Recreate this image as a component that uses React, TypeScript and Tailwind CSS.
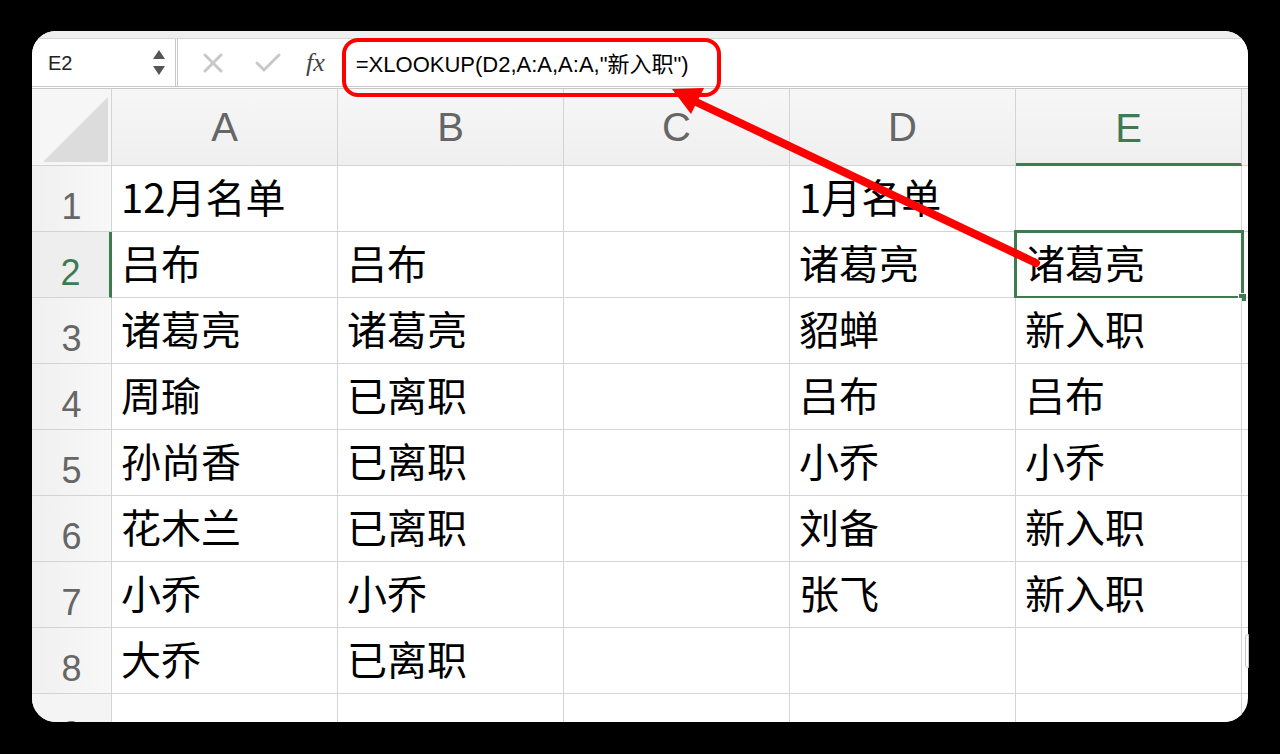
import React from "react";

const cols = ["A", "B", "C", "D", "E"];

const data = [
  ["12月名单", "", "", "1月名单", ""],
  ["吕布", "吕布", "", "诸葛亮", "诸葛亮"],
  ["诸葛亮", "诸葛亮", "", "貂蝉", "新入职"],
  ["周瑜", "已离职", "", "吕布", "吕布"],
  ["孙尚香", "已离职", "", "小乔", "小乔"],
  ["花木兰", "已离职", "", "刘备", "新入职"],
  ["小乔", "小乔", "", "张飞", "新入职"],
  ["大乔", "已离职", "", "", ""],
];

const cjk = { fontFamily: '"Noto Sans CJK SC", "Noto Sans", sans-serif' };
const latin = { fontFamily: '"Liberation Sans", Arial, sans-serif' };

function FormulaBar() {
  return (
    <div className="flex flex-col">
      <div className="h-[8px] bg-[#efefef] border-b border-[#d6d6d6]" />
      <div className="flex h-[50px] items-center bg-white border-b-[3px] border-double border-[#c8c8c8]">
        <div className="flex h-full w-[146px] items-center justify-between border-r-[3px] border-double border-[#c8c8c8] pl-[16px] pr-[10px]">
          <span className="text-[20px] text-[#222]" style={latin}>
            E2
          </span>
          <div className="flex flex-col gap-[7px]">
            <svg width="12" height="9" viewBox="0 0 12 9">
              <path d="M6 0 L12 9 L0 9 Z" fill="#555" />
            </svg>
            <svg width="12" height="9" viewBox="0 0 12 9">
              <path d="M0 0 L12 0 L6 9 Z" fill="#555" />
            </svg>
          </div>
        </div>
        <div className="flex items-center pl-[24px]">
          <svg width="22" height="22" viewBox="0 0 22 22">
            <path d="M3 3 L19 19 M19 3 L3 19" stroke="#c8c8c8" strokeWidth="3" strokeLinecap="round" />
          </svg>
          <svg className="ml-[30px]" width="28" height="22" viewBox="0 0 28 22">
            <path d="M3 11 L10 18 L25 3" stroke="#c8c8c8" strokeWidth="3" fill="none" strokeLinecap="round" />
          </svg>
          <span
            className="ml-[24px] text-[26px] italic text-[#444]"
            style={{ fontFamily: '"Liberation Serif", "Times New Roman", serif' }}
          >
            fx
          </span>
          <span
            className="ml-[31px] pt-[3px] text-[22px] text-black"
            style={{ fontFamily: '"Liberation Sans", "Noto Sans CJK SC", sans-serif' }}
          >
            =XLOOKUP(D2,A:A,A:A,"新入职")
          </span>
        </div>
      </div>
    </div>
  );
}

function HeaderRow() {
  return (
    <div className="flex h-[77px]">
      <div className="relative w-[80px] shrink-0 border-r border-b border-[#d4d4d4] bg-[#f6f6f6]">
        <svg className="absolute left-[11px] top-[8px]" width="66" height="65" viewBox="0 0 66 65">
          <path d="M0 65 L65 65 L65 0 Z" fill="#dcdcdc" />
        </svg>
      </div>
      {cols.map((c) => (
        <div
          key={c}
          className={`flex w-[226px] shrink-0 items-center justify-center border-r border-[#d4d4d4] bg-gradient-to-b from-[#f7f7f7] to-[#efefef] text-[40px] ${
            c === "E" ? "border-b-[3px] border-b-[#3e7b50] text-[#3e7b50] pt-[3px]" : "border-b border-b-[#d4d4d4] text-[#666]"
          }`}
          style={latin}
        >
          {c}
        </div>
      ))}
      <div className="flex-1 border-b border-[#d4d4d4] bg-[#f2f2f2]" />
    </div>
  );
}

function Row({ n, cells }: { n: number; cells: string[] }) {
  const active = n === 2;
  return (
    <div className="flex h-[66px]">
      <div
        className={`flex w-[80px] shrink-0 items-center justify-center border-b border-[#d4d4d4] pt-[16px] text-[36px] ${
          active
            ? "border-r-[3px] border-r-[#3e7b50] bg-[#eeeeee] text-[#3e7b50]"
            : "border-r border-r-[#d4d4d4] bg-gradient-to-r from-[#f0f0f0] to-[#f8f8f8] text-[#666]"
        }`}
        style={latin}
      >
        {n}
      </div>
      {cells.map((v, i) => (
        <div
          key={i}
          className="relative flex w-[226px] shrink-0 items-center border-r border-b border-[#d4d4d4] bg-white pb-[6px] pl-[9px] text-[40px] text-black"
          style={cjk}
        >
          {v}
          {active && i === 4 && (
            <div className="absolute -left-[2px] -top-[2px] h-[69px] w-[230px] border-[3px] border-[#3e7b50]">
              <div className="absolute -bottom-[6px] -right-[6px] h-[9px] w-[9px] border border-white bg-[#3e7b50]" />
            </div>
          )}
        </div>
      ))}
      <div className="flex-1 border-b border-[#d4d4d4] bg-white" />
    </div>
  );
}

export default function App() {
  return (
    <div className="relative h-[754px] w-[1280px] overflow-hidden bg-black pl-[32px] pt-[31px]">
      <div className="h-[691px] w-[1216px] overflow-hidden rounded-[24px] bg-white">
        <FormulaBar />
        <HeaderRow />
        {data.map((cells, i) => (
          <Row key={i} n={i + 1} cells={cells} />
        ))}
        <div className="flex h-[66px]">
          <div
            className="flex w-[80px] shrink-0 items-center justify-center border-r border-[#d4d4d4] bg-[#f4f4f4] pt-[16px] text-[36px] text-[#666]"
            style={latin}
          >
            9
          </div>
          {cols.map((c) => (
            <div key={c} className="w-[226px] shrink-0 border-r border-[#d4d4d4] bg-white" />
          ))}
        </div>
      </div>
      <div className="absolute left-[1245px] top-[634px] h-[34px] w-[4px] rounded-l-[3px] border border-[#c8c8c8] bg-white" />
      <svg className="pointer-events-none absolute left-0 top-0" width="1280" height="754" viewBox="0 0 1280 754">
        <rect x="344" y="40" width="375" height="55" rx="14" fill="none" stroke="#ff0000" strokeWidth="4" />
        <line x1="1036" y1="263" x2="694" y2="101" stroke="#ff0000" strokeWidth="8" strokeLinecap="round" />
        <path d="M672 89 L704 88 L691 114 Z" fill="#ff0000" />
      </svg>
    </div>
  );
}
